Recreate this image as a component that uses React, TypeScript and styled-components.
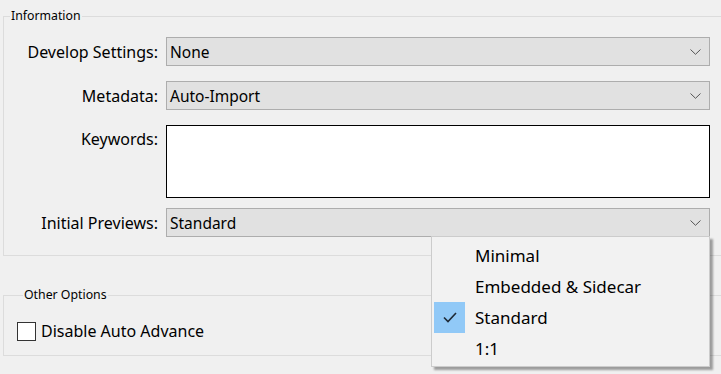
import React from 'react';
import styled, { createGlobalStyle, css } from 'styled-components';

const GlobalStyle = createGlobalStyle`
    html {
        overflow: hidden;
    }
    html, body {
        margin: 0;
        padding: 0;
        background: #f0f0f0;
    }
    body {
        min-height: 100vh;
        font-family: "Noto Sans", "Open Sans", Arial, sans-serif;
        color: #000;
    }
`;

const options = ['Minimal', 'Embedded & Sidecar', 'Standard', '1:1'];

const Chevron: React.FC = () => (
    <ChevronIcon width="11" height="6" viewBox="0 0 11 6">
        <path d="M0.5 0.5 L5.5 5.3 L10.5 0.5" fill="none" stroke="#555" strokeWidth="1" />
    </ChevronIcon>
);

const Check: React.FC = () => (
    <svg width="14" height="11" viewBox="0 0 14 11">
        <path d="M1 5.5 L5 9.5 L13 1" fill="none" stroke="#1f2a36" strokeWidth="1.6" />
    </svg>
);

const App: React.FC = () => {
    return (
        <>
            <GlobalStyle />
            <Page>
                <GroupBox>
                    <Legend>Information</Legend>
                    <Form>
                        <Label>Develop Settings:</Label>
                        <Select>
                            <span>None</span>
                            <Chevron />
                        </Select>

                        <Label>Metadata:</Label>
                        <Select>
                            <span>Auto-Import</span>
                            <Chevron />
                        </Select>

                        <Label top>Keywords:</Label>
                        <TextArea />

                        <Label tight>Initial Previews:</Label>
                        <SelectWrap tight>
                            <Select>
                                <span>Standard</span>
                                <Chevron />
                            </Select>
                            <Menu>
                                {options.map(o => (
                                    <MenuItem key={o}>
                                        <CheckSlot checked={o === 'Standard'}>
                                            {o === 'Standard' && <Check />}
                                        </CheckSlot>
                                        <span>{o}</span>
                                    </MenuItem>
                                ))}
                            </Menu>
                        </SelectWrap>
                    </Form>
                </GroupBox>

                <GroupBox small>
                    <Legend>Other Options</Legend>
                    <CheckRow>
                        <CheckBox />
                        <span>Disable Auto Advance</span>
                    </CheckRow>
                </GroupBox>
            </Page>
        </>
    );
}

export default App;

const Page = styled.div`
    padding: 9px 0 0 3px;
    width: 760px;
    display: flex;
    flex-direction: column;
    align-items: stretch;
    gap: 32px;
`;

const GroupBox = styled.fieldset<{ small?: boolean }>`
    box-sizing: border-box;
    width: 100%;
    margin: 0;
    border: 1px solid #dcdcdc;
    border-right: none;
    padding: 14px 0 18px 0;
    min-width: 0;

    ${props =>
        props.small &&
        css`
            padding: 18px 0 13px 13px;
    `}
`;

const Legend = styled.legend`
    font-size: 12.3px;
    line-height: 14px;
    padding: 0 1px;
    margin-left: 6px;
    color: #000;
`;

const Form = styled.div`
    display: grid;
    grid-template-columns: 154px 544px;
    column-gap: 8px;
    row-gap: 15px;
`;

const Label = styled.div<{ top?: boolean, tight?: boolean }>`
    font-size: 16px;
    text-align: right;
    align-self: center;
    ${props => props.top && css`
        align-self: start;
        padding-top: 3px;
    `}
    ${props => props.tight && css`
        margin-top: -5px;
    `}
`;

const SelectWrap = styled.div<{ tight?: boolean }>`
    position: relative;
    ${props => props.tight && css`
        margin-top: -5px;
    `}
`;

const Select = styled.div`
    box-sizing: border-box;
    height: 29px;
    background: #e1e1e1;
    border: 1px solid #adadad;
    display: flex;
    align-items: center;
    justify-content: space-between;
    padding: 0 8px 0 3px;
    font-size: 15.5px;
`;

const ChevronIcon = styled.svg`
    display: block;
    margin-top: 1px;
`;

const TextArea = styled.div`
    box-sizing: border-box;
    height: 73px;
    background: #fff;
    border: 1px solid #000;
`;

const Menu = styled.div`
    position: absolute;
    top: 28px;
    left: 265px;
    width: 279px;
    box-sizing: border-box;
    background: #f2f2f2;
    border: 1px solid #cccccc;
    padding: 3px 0 2px 2px;
    box-shadow: 3px 3px 2px rgba(0, 0, 0, 0.35);
    z-index: 2;
`;

const MenuItem = styled.div`
    height: 31px;
    display: flex;
    align-items: center;
    gap: 10px;
    font-size: 17px;
`;

const CheckSlot = styled.div<{ checked?: boolean }>`
    width: 31px;
    height: 31px;
    display: flex;
    align-items: center;
    justify-content: center;
    background: ${props => props.checked ? '#91c9f7' : 'transparent'};
`;

const CheckRow = styled.div`
    display: flex;
    align-items: center;
    gap: 5px;
    font-size: 16px;
`;

const CheckBox = styled.div`
    box-sizing: border-box;
    width: 19px;
    height: 19px;
    background: #fff;
    border: 1px solid #333;
`;
